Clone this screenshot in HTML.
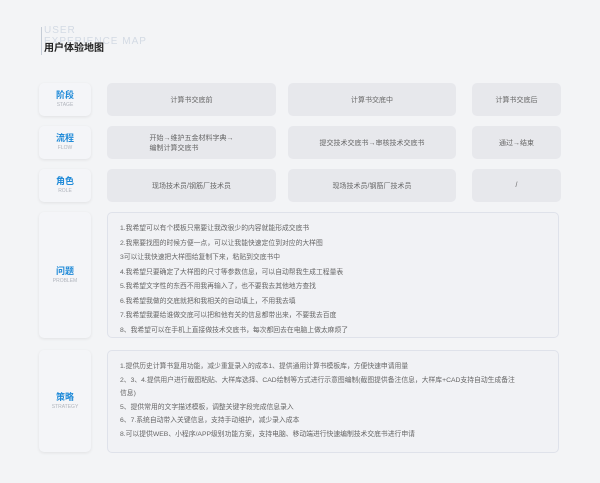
<!DOCTYPE html>
<html><head><meta charset="utf-8"><style>
body{margin:0;width:600px;height:483px;background:#f3f4f6;font-family:"Liberation Sans","Noto Sans CJK SC",sans-serif;position:relative;overflow:hidden}
.a{position:absolute}
.lab{position:absolute;left:39px;width:52px;background:#f4f5f8;border-radius:5px;box-shadow:0 1px 3px rgba(0,0,0,.08);text-align:center;display:flex;flex-direction:column;justify-content:center}
.lab b{color:#1f8ad8;font-size:9px;line-height:11px}
.lab i{font-style:normal;color:#b0b4bc;font-size:5px;line-height:8px}
.c{position:absolute;background:#e7e8ec;border-radius:5px;color:#666;font-size:7px;display:flex;align-items:center;justify-content:center;text-align:left}
.box{position:absolute;left:107px;width:452px;background:#f1f2f5;border:1px solid #dfe2ea;border-radius:5px;color:#666;font-size:6.8px;box-sizing:border-box;padding-left:12px}
.box div{white-space:nowrap}
</style></head><body>
<div class="a" style="left:41px;top:27px;width:1px;height:28px;background:#c5ccd6"></div>
<div class="a" style="left:44px;top:25px;font-size:10px;color:#d3dae4;letter-spacing:1px;line-height:11px">USER<br>EXPERIENCE MAP</div>
<div class="a" style="left:44px;top:43px;font-size:10px;font-weight:bold;color:#222;background:#f3f4f6;line-height:12px">用户体验地图</div>

<div class="lab" style="top:83px;height:33px"><b>阶段</b><i>STAGE</i></div>
<div class="lab" style="top:126px;height:33px"><b>流程</b><i>FLOW</i></div>
<div class="lab" style="top:169px;height:33px"><b>角色</b><i>ROLE</i></div>
<div class="lab" style="top:212px;height:126px"><b>问题</b><i>PROBLEM</i></div>
<div class="lab" style="top:350px;height:102px"><b>策略</b><i>STRATEGY</i></div>

<div class="c" style="left:107px;top:83px;width:169px;height:33px">计算书交底前</div>
<div class="c" style="left:288px;top:83px;width:168px;height:33px">计算书交底中</div>
<div class="c" style="left:472px;top:83px;width:89px;height:33px">计算书交底后</div>
<div class="c" style="left:107px;top:126px;width:169px;height:33px"><span>开始→维护五金材料字典→<br>编制计算交底书</span></div>
<div class="c" style="left:288px;top:126px;width:168px;height:33px">提交技术交底书→审核技术交底书</div>
<div class="c" style="left:472px;top:126px;width:89px;height:33px">通过→结束</div>
<div class="c" style="left:107px;top:169px;width:169px;height:33px">现场技术员/钢筋厂技术员</div>
<div class="c" style="left:288px;top:169px;width:168px;height:33px">现场技术员/钢筋厂技术员</div>
<div class="c" style="left:472px;top:169px;width:89px;height:33px">/</div>

<div class="box" style="top:212px;height:126px;padding-top:9px;line-height:14.5px">
<div>1.我希望可以有个模板只需要让我改很少的内容就能形成交底书</div>
<div>2.我需要找图的时候方便一点，可以让我能快速定位到对应的大样图</div>
<div>3可以让我快速把大样图给复制下来，粘贴到交底书中</div>
<div>4.我希望只要确定了大样图的尺寸等参数信息，可以自动帮我生成工程量表</div>
<div>5.我希望文字性的东西不用我再输入了，也不要我去其他地方查找</div>
<div>6.我希望我做的交底就把和我相关的自动填上，不用我去填</div>
<div>7.我希望我要给谁做交底可以把和他有关的信息都带出来，不要我去百度</div>
<div>8、我希望可以在手机上直接做技术交底书，每次都回去在电脑上做太麻烦了</div>
</div>
<div class="box" style="top:350px;height:103px;padding-top:9px;line-height:13.5px;overflow:hidden">
<div>1.提供历史计算书复用功能，减少重复录入的成本1、提供通用计算书模板库，方便快速申请用量</div>
<div>2、3、4.提供用户进行截图粘贴、大样库选择、CAD绘制等方式进行示意图编制(截图提供备注信息，大样库+CAD支持自动生成备注</div>
<div>信息)</div>
<div>5、提供常用的文字描述模板，调整关键字段完成信息录入</div>
<div>6、7.系统自动带入关键信息，支持手动维护，减少录入成本</div>
<div>8.可以提供WEB、小程序/APP级别功能方案，支持电脑、移动端进行快速编制技术交底书进行申请</div>
</div>
</body></html>
